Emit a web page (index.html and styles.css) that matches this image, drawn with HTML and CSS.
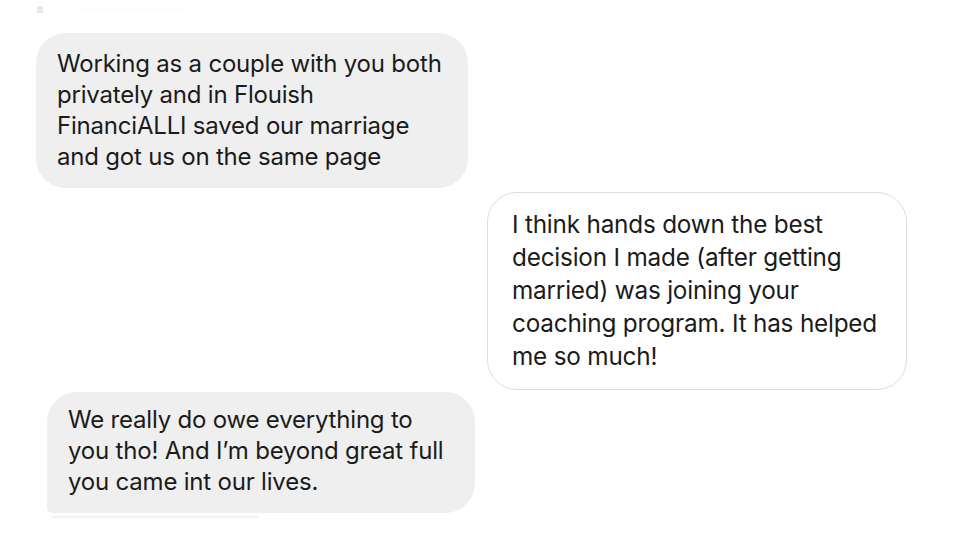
FILE: index.html
```html
<!DOCTYPE html>
<html>
<head>
<meta charset="utf-8">
<link rel="stylesheet" href="styles.css">
</head>
<body>
<div class="thread">
  <div class="status">
    <span class="status-dot"></span>
    <span class="status-line"></span>
  </div>
  <div class="bubble bubble-in first">Working as a couple with you both privately and in Flouish FinanciALLI saved our marriage and got us on the same page</div>
  <div class="bubble bubble-out">I think hands down the best decision I made (after getting married) was joining your coaching program. It has helped me so much!</div>
  <div class="bubble bubble-in last">We really do owe everything to you tho! And I’m beyond great full you came int our lives.</div>
  <div class="under-line"></div>
</div>
</body>
</html>
```

FILE: styles.css
```css
html, body {
  margin: 0;
  padding: 0;
  background: #ffffff;
}
body {
  width: 960px;
  height: 540px;
  overflow: hidden;
  font-family: "Inter", "Liberation Sans", sans-serif;
  color: #1b1b1b;
}
.thread {
  display: flex;
  flex-direction: column;
  align-items: flex-start;
}
.status {
  display: flex;
  align-items: center;
  gap: 40px;
  height: 33px;
  padding-left: 37px;
  box-sizing: border-box;
  padding-bottom: 14px;
}
.status-dot {
  width: 6px;
  height: 7px;
  background: #e8e8e8;
}
.status-line {
  width: 100px;
  height: 1px;
  background: #f8f8f8;
}
.bubble {
  box-sizing: border-box;
  font-size: 24px;
  line-height: 31px;
  letter-spacing: -0.2px;
}
.bubble-in {
  background: #efefef;
  border-radius: 30px;
}
.first {
  margin-left: 36px;
  width: 432px;
  padding: 15px 20px 16px 21px;
}
.bubble-out {
  align-self: flex-end;
  margin-top: 4px;
  margin-right: 53px;
  width: 420px;
  border: 1px solid #dddddd;
  border-radius: 30px;
  font-size: 24.3px;
  line-height: 33px;
  padding: 15px 10px 16px 24px;
}
.last {
  margin-top: 2px;
  margin-left: 47px;
  width: 428px;
  padding: 12px 20px 16px 21px;
  border-radius: 30px 30px 30px 6px;
}
.under-line {
  margin-top: 3px;
  margin-left: 52px;
  width: 206px;
  height: 2px;
  background: #f0f0f0;
}
```
